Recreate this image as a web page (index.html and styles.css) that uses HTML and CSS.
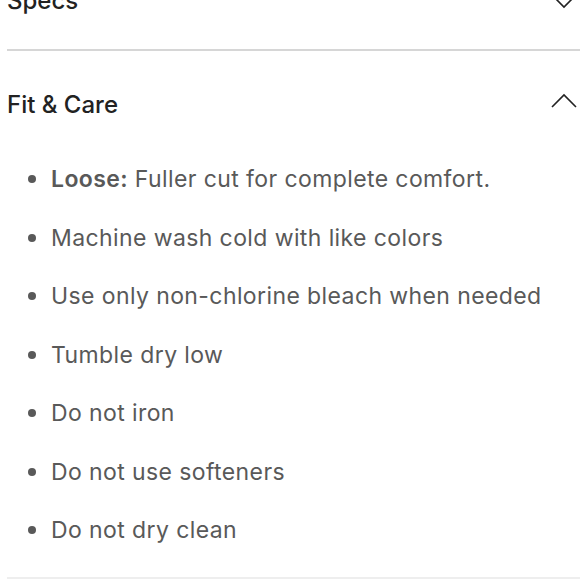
FILE: index.html
```html
<!DOCTYPE html>
<html lang="en">
<head>
<meta charset="utf-8">
<link rel="stylesheet" href="styles.css">
</head>
<body>
<div class="page">
  <section class="acc acc--specs">
    <div class="acc-head acc-head--specs">
      <h2 class="acc-title">Specs</h2>
      <svg class="chev" width="26" height="26" viewBox="0 0 26 26" aria-hidden="true"><path d="M1 7 L13 19 L25 7" fill="none" stroke="#222" stroke-width="1.6"/></svg>
    </div>
  </section>
  <section class="acc acc--fit">
    <div class="acc-head">
      <h2 class="acc-title">Fit &amp; Care</h2>
      <svg class="chev" width="26" height="26" viewBox="0 0 26 26" aria-hidden="true"><path d="M1 15 L13 3 L25 15" fill="none" stroke="#222" stroke-width="1.6"/></svg>
    </div>
    <ul class="care">
      <li><b>Loose:</b> Fuller cut for complete comfort.</li>
      <li>Machine wash cold with like colors</li>
      <li>Use only non-chlorine bleach when needed</li>
      <li>Tumble dry low</li>
      <li>Do not iron</li>
      <li>Do not use softeners</li>
      <li>Do not dry clean</li>
    </ul>
  </section>
</div>
</body>
</html>
```
FILE: styles.css
```css
html, body {
  margin: 0;
  padding: 0;
  background: #fff;
}
body {
  font-family: Inter, "Noto Sans", sans-serif;
  overflow: hidden;
}
.page {
  padding-left: 7px;
}
.acc {
  border-bottom: 2px solid #d6d6d6;
}
.acc--specs {
  margin-top: -47px;
}
.acc--fit {
  border-bottom-color: #eeeeee;
}
.acc-head {
  display: flex;
  align-items: center;
  justify-content: space-between;
  height: 108px;
}
.acc-head--specs {
  height: 96px;
}
.acc-title {
  margin: 0;
  font-size: 24px;
  line-height: 28px;
  font-weight: 500;
  color: #222;
  letter-spacing: 0;
}
.chev {
  display: block;
  margin-right: 3px;
}
.care {
  list-style: none;
  margin: 0;
  padding: 6px 0 2px 0;
}
.care li {
  position: relative;
  padding-left: 44px;
  font-size: 23px;
  line-height: 28px;
  letter-spacing: 0.4px;
  margin-bottom: 30.5px;
  color: #595959;
}
.care li::before {
  content: "";
  position: absolute;
  left: 21px;
  top: 10px;
  width: 8px;
  height: 8px;
  border-radius: 50%;
  background: #595959;
}
.care b {
  font-weight: 600;
}
```
